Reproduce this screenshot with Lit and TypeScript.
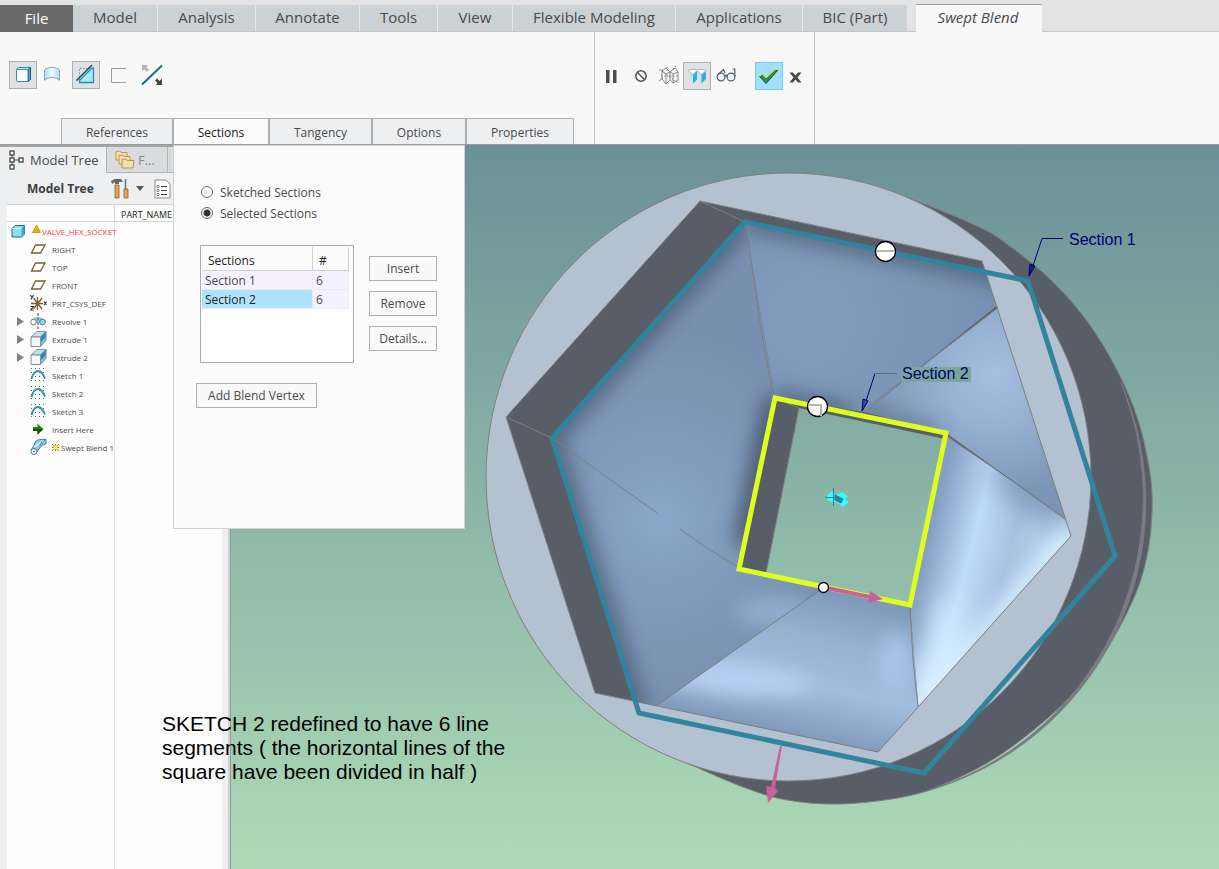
import { LitElement, html, svg, css, nothing } from "lit";
import { customElement, state } from "lit/decorators.js";

const ribbonTabs = [
  { label: "File", width: 73, cls: "file" },
  { label: "Model", width: 85, cls: "" },
  { label: "Analysis", width: 98, cls: "" },
  { label: "Annotate", width: 104, cls: "" },
  { label: "Tools", width: 78, cls: "" },
  { label: "View", width: 75, cls: "" },
  { label: "Flexible Modeling", width: 163, cls: "" },
  { label: "Applications", width: 127, cls: "" },
  { label: "BIC (Part)", width: 105, cls: "" },
  { label: "Swept Blend", width: 126, cls: "current" },
];

const panelTabs = [
  { label: "References", width: 112 },
  { label: "Sections", width: 96 },
  { label: "Tangency", width: 103 },
  { label: "Options", width: 94 },
  { label: "Properties", width: 108 },
];

type Kind = "plane" | "csys" | "revolve" | "extrude" | "sketch" | "insert" | "blend";

const treeRows: { label: string; kind: Kind; expandable?: boolean; fresh?: boolean }[] = [
  { label: "RIGHT", kind: "plane" },
  { label: "TOP", kind: "plane" },
  { label: "FRONT", kind: "plane" },
  { label: "PRT_CSYS_DEF", kind: "csys" },
  { label: "Revolve 1", kind: "revolve", expandable: true },
  { label: "Extrude 1", kind: "extrude", expandable: true },
  { label: "Extrude 2", kind: "extrude", expandable: true },
  { label: "Sketch 1", kind: "sketch" },
  { label: "Sketch 2", kind: "sketch" },
  { label: "Sketch 3", kind: "sketch" },
  { label: "Insert Here", kind: "insert" },
  { label: "Swept Blend 1", kind: "blend", fresh: true },
];

/* Silhouette of the valve body behind the front face, clockwise from the top. */
const bodyOutline: [number, number][] = [
  [906, 197], [937, 209], [977, 226], [1003, 241], [1050, 279], [1087, 321], [1117, 370], [1138, 420], [1150, 473],
  [1152, 513], [1147, 556], [1133, 600], [1103, 655], [1063, 704], [1003, 753], [947, 783], [903, 797], [840, 804],
  [787, 800], [743, 787], [687, 763], [672, 756],
];

/* Smooth curve through a list of points (Catmull-Rom converted to cubic Béziers). */
function smooth(p: [number, number][]): string {
  let d = `M${p[0][0]} ${p[0][1]}`;
  for (let i = 0; i < p.length - 1; i++) {
    const a = p[Math.max(i - 1, 0)];
    const b = p[i];
    const c = p[i + 1];
    const e = p[Math.min(i + 2, p.length - 1)];
    d += `C${b[0] + (c[0] - a[0]) / 6} ${b[1] + (c[1] - a[1]) / 6} ${c[0] - (e[0] - b[0]) / 6} ${c[1] - (e[1] - b[1]) / 6} ${c[0]} ${c[1]}`;
  }
  return d;
}

const glyphs: Record<Kind, unknown> = {
  plane: svg`<path d="M5.500 5H15L10.500 13H1.500Z" fill="#fff" stroke="#7a5c2e" stroke-width="1.300"/>`,
  csys: svg`<g fill="none" stroke="#7a5c2e" stroke-width="1.300"><path d="M1 9.500H13M7.500 3V16M3.500 4L12 15M12 4L3.500 15"/></g><g stroke="#333" fill="none" stroke-width="1.100"><path d="M.5 1L2 3.500M3.500 1L1 5.500M14 7.500L16.500 11M16.500 7.500L14 11M.5 12.500H3.500L.5 16H3.500"/></g>`,
  revolve: svg`<path d="M2 8C4 3.500 12 3.500 14 8L8 11Z" fill="#9ccfe6"/><circle cx="3.500" cy="10" r="2.800" fill="#fff" stroke="#777"/><circle cx="12.500" cy="10" r="2.800" fill="#8fdcf5" stroke="#2a7fa3"/><path d="M8 1V17" stroke="#444" stroke-dasharray="3 1.500"/>`,
  extrude: svg`<path d="M1 7L7 1.500H16L10.500 7Z" fill="#b4e4f5" stroke="#6d7f88" stroke-width=".8"/><path d="M10.500 7L16 1.500V10.500L10.500 16.500Z" fill="#7cc3df" stroke="#6d7f88" stroke-width=".8"/><path d="M11 7L15.800 2V7L11 12Z" fill="#2f88b0"/><path d="M1 7H10.500V16.500H1Z" fill="#f4f6f7" stroke="#8b8f92"/>`,
  sketch: svg`<path d="M1 2.500H16M1 6.500H16M1 10.500H16M1 14.500H16" stroke="#666" stroke-dasharray="1 3"/><path d="M1.500 13C3 7 5 5 8 5C11.500 5 13 8 15 12.500" fill="none" stroke="#3291bd" stroke-width="1.800"/>`,
  insert: svg`<path d="M3 7H7.500V3.500L13.500 9L7.500 14.500V11H3Z" fill="#0a8a12"/><path d="M3 9H13.500L7.500 14.500V11H3Z" fill="#1c4d0f"/><path d="M7.500 3.500L13.500 9" stroke="#a9e23a" stroke-width=".8"/>`,
  blend: svg`<path d="M1 12C3 9 4 8 5 5C6 2 9 1 16 1.500V6C12 6.500 10 9 7 14Z" fill="#8ecbe3" stroke="#3b7d9a"/><path d="M4 9C8 8 7 4 15 3" fill="none" stroke="#e2f6fd" stroke-width="1.500"/><path d="M10 8L12 3M12 6L15 2" stroke="#2d7595" stroke-width=".8"/><circle cx="4" cy="13.500" r="3" fill="#f4fbfd" stroke="#3b7d9a"/><circle cx="4" cy="13.500" r=".8" fill="#444"/>`,
};

const toolIcons = {
  solid: svg`<path d="M4.500 5.500L6.500 3.500H18.500V15L16.500 17.500Z" fill="#bfeaf8" stroke="#2b8bb0"/><path d="M16 5.500L18.500 3.500V15.500L16 17.500Z" fill="#4fa6c8" stroke="#17475e" stroke-width=".8"/><rect x="4.500" y="5.500" width="11.500" height="12" rx="1" fill="#fff" stroke="#2b8bb0"/>`,
  surface: svg`<path d="M2.500 16.500V6C6 2.500 14 2.500 17.500 6V16.500C14 12.500 6 12.500 2.500 16.500Z" fill="url(#surf)" stroke="#9aa0a4"/>`,
  remove: svg`<path d="M4.500 16V4.500H16" fill="none" stroke="#888" stroke-dasharray="1.500 1.500"/><path d="M18.500 4V18.500H4.500V16.500L17 4Z" fill="#a6eafd" stroke="#2b8bb0" stroke-width="1.300"/><path d="M1.500 16.500L17 1" stroke="#17475e" stroke-width="1.500"/>`,
  thin: svg`<path d="M16 4.500H1.500V18.500H16" fill="none" stroke="#9a9c9e"/>`,
  flip: svg`<path d="M2 20.500L22 1.500" stroke="#1d6a8a" stroke-width="2"/><path d="M2 1H8L6.500 3.500L9 6L7 8L4.500 5.500L2 7Z" fill="#b5b5b5"/><path d="M22 21H15.500L17.500 19L15 16.500L17 14.500L19.500 17L22 14.500Z" fill="#444"/>`,
  pause: svg`<path d="M7 5H10.500V18H7ZM14 5H17.500V18H14Z" fill="#4b4d50"/>`,
  none: svg`<circle cx="12" cy="11" r="5.200" fill="none" stroke="#55585b" stroke-width="1.600"/><path d="M8.500 7.500L15.500 14.500" stroke="#55585b" stroke-width="1.500"/>`,
  wire: svg`<g fill="none" stroke="#6b6d70" stroke-width=".8"><path d="M4 6L8 3L12 7L8 9ZM4 6V14L8 19V9M12 7V15L8 19M12 7L17 3L20 7L15 9L12 7M15 9V18L20 15V7M15 18L12 15M1 5H5M1 16L5 13"/><path d="M9 2V6M18 1L14 5M3 11H20M4 6L20 18" stroke-dasharray="1.500 1.500"/></g>`,
  preview: svg`<path d="M2 6V13L7 18.500V9.500Z" fill="#bdeafb"/><path d="M7 9.500L11.500 5V14L7 18.500Z" fill="#37acdf"/><path d="M11 5L15.500 9.500V18.500L11 13Z" fill="#bdeafb"/><path d="M15.500 9.500L20 6V14L15.500 18.500Z" fill="#37acdf"/><path d="M2 5.500L4 4.500H10L11 5.500L12 4.500H18L20 5.500L15.500 9.500L11 5.500L7 9.500Z" fill="#fff" stroke="#a8a8a8" stroke-width=".8"/>`,
  glasses: svg`<g fill="#eef4f7" stroke="#5a5d60" stroke-width="1.200"><circle cx="6" cy="12" r="3.900"/><circle cx="16" cy="12" r="3.900"/></g><path d="M2.500 10L8.500 4.500L10 8M10 12C10 9.500 12 9.500 12 12M19.800 12V4H17.500" fill="none" stroke="#5a5d60" stroke-width="1.200"/>`,
  ok: svg`<path d="M1.500 11.500L4.500 9.500L8 13.500L17 5H20L8 18.500Z" fill="#2d8a52" stroke="#17552f"/><path d="M1.500 11L4.500 9L8 13L17 4.500H20" fill="none" stroke="#c5e62e" stroke-width="1.100"/>`,
  cancel: svg`<path d="M3.500 7.500H7L9.500 10.500L12 7.500H15.500L11.500 12.500L15.500 17.500H12L9.500 14.500L7 17.500H3.500L7.500 12.500Z" fill="#484848"/>`,
};

@customElement("app-root")
export class AppRoot extends LitElement {
  @state() private mode = "selected";
  @state() private row = 1;

  static styles = css`
    :host {
      display: flex;
      flex-direction: column;
      min-height: 100vh;
      font-family: "Open Sans", "Noto Sans", sans-serif;
      font-size: 12px;
      color: #4a4a4d;
      background: #f8f8f8;
    }
    * { box-sizing: border-box; }
    button { font: inherit; color: inherit; margin: 0; padding: 0; border: 0; background: none; }
    svg { display: block; }
    .ribbon {
      display: flex;
      height: 32px;
      padding-top: 5px;
      background: #e3e3e3;
      border-bottom: 1px solid #c4c7c9;
    }
    .ribbon button {
      background: #ccd1d4;
      border-right: 1px solid #e6e8e9;
      font-size: 15px;
      line-height: 24px;
      padding-bottom: 2px;
      white-space: nowrap;
      flex: none;
    }
    .ribbon .file { background: #696969; color: #fff; border-right: 0; height: 27px; }
    .ribbon .current {
      background: #f8f8f8;
      border: 0;
      border-top: 1px solid #9b9da0;
      font-style: italic;
      height: 28px;
      padding: 0 2px 4px 0;
      margin: -1px 0 -1px 8px;
      position: relative;
    }
    .dashboard {
      display: flex;
      height: 113px;
      border-bottom: 1px solid #9b9b9b;
      position: relative;
    }
    .left { width: 595px; border-right: 1px solid #c0c2c4; display: flex; flex-direction: column; justify-content: space-between; }
    .tools { display: flex; align-items: center; gap: 10px; padding: 29px 0 0 9px; }
    .pair { display: flex; align-items: center; gap: 5px; }
    .tool { display: flex; align-items: center; justify-content: center; width: 28px; height: 28px; flex: none; }
    .narrow { width: 20px; }
    .mid { width: 24px; }
    .pressed { background: #e0e1e3; border: 1px solid #adafb1; }
    .confirm { background: #a2defd; border: 1px solid #70cbf6; }
    .actions { display: flex; width: 220px; border-right: 1px solid #c0c2c4; padding-top: 30px; }
    .wide { width: 30px; }
    .gap { width: 14px; }
    .panel-tabs { display: flex; padding-left: 61px; }
    .panel-tabs button {
      height: 26px;
      padding-top: 2px;
      line-height: 22px;
      background: #eeeff1;
      border: 1px solid #adafb1;
      border-bottom: 0;
    }
    .panel-tabs .open { background: #fcfcfc; color: #222; }
    .slide {
      position: absolute;
      top: 113px;
      left: 173px;
      width: 292px;
      height: 384px;
      z-index: 2;
      background: #fbfbfb;
      border: 1px solid #cfd1d2;
      padding: 36px 22px 0;
    }
    .option { display: flex; align-items: center; gap: 6px; height: 21px; margin-left: 5px; }
    .option input {
      appearance: none;
      margin: 0 1px 2px 0;
      width: 12px;
      height: 12px;
      border: 1px solid #666;
      border-radius: 50%;
      background: #fff;
    }
    .option input:checked { background: radial-gradient(circle, #333 0 3px, #fff 4px); }
    .sections { display: flex; gap: 15px; margin: 21px 0 20px 4px; }
    .listbox { width: 154px; height: 118px; border: 1px solid #a9abad; background: #fff; padding: 1px; }
    .listbox table { border-collapse: separate; border-spacing: 0; table-layout: fixed; width: 147px; }
    .listbox th {
      height: 24px;
      padding: 4px 0 0 6px;
      text-align: left;
      font-weight: 400;
      color: #222;
      background: #fbfbfb;
      border-right: 1px solid #cfd1d2;
      border-bottom: 1px solid #cfd1d2;
    }
    .listbox td { height: 19px; padding: 1px 3px 0; line-height: 17px; background: #f5f1fe; border-right: 1px solid #e9e9f0; border-bottom: 1px solid #e9e9f0; }
    .listbox td.picked { background: #afe2ff; color: #222; }
    .name-col { width: 111px; }
    .stack { display: flex; flex-direction: column; gap: 10px; padding-top: 11px; }
    .push { height: 25px; width: 68px; border: 1px solid #adafb1; background: #f9f9f9; }
    .push.add { width: 121px; }
    .main { flex: 1; display: flex; position: relative; }
    .side {
      width: 231px;
      flex: none;
      background: #eeeff1;
      border-right: 1px solid #9a9a9a;
      box-shadow: inset -2px 0 #cfd0d1;
      display: flex;
      flex-direction: column;
    }
    .side-tabs { display: flex; height: 28px; border-top: 2px solid #a3a5a7; margin-right: 3px; }
    .side-tabs button { display: flex; align-items: center; gap: 6px; font-size: 13px; padding-left: 9px; width: 106px; }
    .side-tabs .folder { width: 62px; gap: 3px; padding-left: 8px; background: #d9dcdd; border: 1px solid #b1b3b5; border-top: 0; color: #888; }
    .side-tabs .rest { flex: 1; background: #d9dcdd; border-bottom: 1px solid #b1b3b5; }
    .side-head { display: flex; align-items: center; height: 31px; padding-left: 27px; gap: 6px; }
    .side-head h2 { margin: 0 6px 0 0; font-size: 12px; line-height: 16px; width: 72px; white-space: nowrap; color: #3d3d40; }
    .side-head .tool { width: 18px; height: 22px; }
    .side-head .list { margin-left: 2px; }
    .side-head .arrow { width: 10px; }
    .tree-wrap { flex: 1; display: flex; margin: 0 8px 0 7px; background: linear-gradient(90deg, #fdfdfd 107px, #e6e7e8 107px 108px, #fdfdfd 108px); border-top: 1px solid #d3d5d6; }
    .tree { width: 100%; border-collapse: separate; border-spacing: 0; table-layout: fixed; font-size: 8px; height: 0; }
    .tree th { height: 17px; padding: 2px 0 0 6px; text-align: left; font-size: 9px; line-height: 13px; font-weight: 400; color: #222; border-bottom: 1px solid #d3d5d6; }
    .tree th:first-child { border-right: 1px solid #d3d5d6; }
    .tree td { height: 18px; padding: 0; white-space: nowrap; }
    .tree .c1 { width: 108px; }
    .node { display: flex; align-items: center; height: 18px; padding-left: 9px; }
    .node .twist { width: 8px; margin-right: 6px; }
    .node .glyph { margin-right: 5px; flex: none; }
    .node .new { margin-right: 2px; flex: none; }
    .root { padding-left: 4px; color: #ee4438; }
    .root .warn { margin: 0 1px 4px 6px; flex: none; }
    .root .glyph { margin-right: 0; }
    .view { flex: 1; min-width: 0; background: linear-gradient(#6b9098, #addbb6); }
    .scene { width: 100%; height: 100%; }
    .tag { font-family: "Liberation Sans", Arial, sans-serif; font-size: 16px; fill: #000070; }
    .note {
      position: absolute;
      left: 162px;
      top: 567px;
      width: 360px;
      margin: 0;
      font: 21px/24px "Liberation Sans", Arial, sans-serif;
      color: #000;
    }
    .edge { fill: none; stroke: #7f7f7f; stroke-width: 1; }
    .section1 { fill: none; stroke: #31849b; stroke-width: 5; stroke-linejoin: round; }
    .section2 { fill: none; stroke: #dfff20; stroke-width: 5; }
    .shade { fill: none; stroke: #3d4a5c; }
    .leader { fill: none; stroke: #000070; }
  `;

  private icon(name: keyof typeof toolIcons, w = 22) {
    return html`<svg width=${w} height="22" viewBox="0 0 ${w} 22" aria-hidden="true">${toolIcons[name]}</svg>`;
  }

  private renderSlide() {
    const rows = ["Section 1", "Section 2"];
    return html`<section class="slide" aria-label="Sections">
      ${[["sketched", "Sketched Sections"], ["selected", "Selected Sections"]].map(
        ([id, label]) => html`<label class="option"
          ><input type="radio" name="mode" .checked=${this.mode === id} @change=${() => (this.mode = id)} />${label}</label>`
      )}
      <div class="sections">
        <div class="listbox">
          <table>
            <thead><tr><th class="name-col">Sections</th><th>#</th></tr></thead>
            <tbody>
              ${rows.map((r, i) => html`<tr @click=${() => (this.row = i)}><td class=${this.row === i ? "picked" : ""}>${r}</td><td>6</td></tr>`)}
            </tbody>
          </table>
        </div>
        <div class="stack">
          ${["Insert", "Remove", "Details..."].map((t) => html`<button class="push">${t}</button>`)}
        </div>
      </div>
      <button class="push add">Add Blend Vertex</button>
    </section>`;
  }

  private renderSide() {
    return html`<aside class="side">
      <div class="side-tabs">
        <button>
          <svg width="15" height="20" viewBox="0 0 15 20" aria-hidden="true"><path d="M3 5V15M5 10H10" stroke="#555"/><g fill="#fff" stroke="#444" stroke-width="1.300"><rect x="1" y="1" width="4" height="4"/><rect x="1" y="8" width="4" height="4"/><rect x="1" y="15" width="4" height="4"/><rect x="10" y="8" width="4" height="4"/></g></svg>
          Model Tree
        </button>
        <button class="folder">
          <svg width="20" height="19" viewBox="0 0 20 19" aria-hidden="true"><g fill="#f3dfae" stroke="#b0813a" stroke-width=".8"><path d="M1 10V1.500L5 1L6 2.500H12V10Z"/><path d="M4 14V5.500L8 5L9 6.500H15V14Z"/><path d="M7 18V9.500L11 9L12 10.500H19L18 18Z"/></g></svg>
          F...
        </button>
        <span class="rest"></span>
      </div>
      <div class="side-head">
        <h2>Model Tree</h2>
        <button class="tool" aria-label="Settings"><svg width="18" height="22" viewBox="0 0 18 22" aria-hidden="true"><path d="M0 3L4 1H10L12 4H8V6H4V4L1 6Z" fill="#65686b"/><path d="M4 7H8V20H4Z" fill="#d9a75f" stroke="#8b5e24" stroke-width=".8"/><path d="M14.500 1V11" stroke="#75787b" stroke-width="1.600"/><path d="M13 11H17V20H13Z" fill="#d9a75f" stroke="#8b5e24" stroke-width=".8"/></svg></button>
        <button class="tool arrow" aria-label="Settings menu"><svg width="8" height="5" viewBox="0 0 8 5" aria-hidden="true"><path d="M0 0H8L4 5Z" fill="#555"/></svg></button>
        <button class="tool list" aria-label="Show"><svg width="17" height="20" viewBox="0 0 17 20" aria-hidden="true"><path d="M1 1H12L16 5V19H1Z" fill="#fff" stroke="#8a8c8e"/><path d="M7 7.500H13M7 11.500H13M7 15.500H13" stroke="#444"/><g fill="none" stroke="#555" stroke-width=".8"><circle cx="4" cy="7.500" r="1.200"/><circle cx="4" cy="11.500" r="1.200"/><circle cx="4" cy="15.500" r="1.200"/></g></svg></button>
      </div>
      <div class="tree-wrap">
        <table class="tree">
          <thead><tr><th class="c1"></th><th>PART_NAME</th></tr></thead>
          <tbody>
            <tr><td><div class="node root">
              <svg class="glyph" width="15" height="16" viewBox="0 0 15 16" aria-hidden="true"><path d="M1 5.500L4 2.500H13.500V11L10.500 14H1Z" fill="#8fdcf5" stroke="#1d6a8a"/><path d="M10.500 5.500L13.500 2.500V11L10.500 14Z" fill="#3ba2cb"/><path d="M1 5.500H10.500" stroke="#e2f7fd"/></svg>
              <svg class="warn" width="9" height="8" viewBox="0 0 9 8" aria-hidden="true"><path d="M4.500 0L8.500 7.500H.5Z" fill="#e7b400" stroke="#b88600" stroke-width=".7"/></svg>VALVE_HEX_SOCKET</div></td><td></td></tr>
            ${treeRows.map((r) => html`<tr><td><div class="node">
              <svg class="twist" width="8" height="9" viewBox="0 0 8 9" aria-hidden="true">${r.expandable ? svg`<path d="M1 0L8 4.500L1 9Z" fill="#828282"/>` : nothing}</svg>
              <svg class="glyph" width="17" height="18" viewBox="0 0 17 18" aria-hidden="true">${glyphs[r.kind]}</svg>
              ${r.fresh ? html`<svg class="new" width="7" height="7" viewBox="0 0 7 7" aria-hidden="true"><path d="M0 0L7 7M7 0L0 7M0 3.500H7M3.500 0V7" stroke="#555" stroke-width=".8"/><path d="M1.500 1.500H5.500V5.500H1.500Z" fill="#fff200"/></svg>` : nothing}${r.label}</div></td><td></td></tr>`)}
          </tbody>
        </table>
      </div>
    </aside>`;
  }

  private renderScene() {
    const outline = smooth(bodyOutline);
    return html`<svg class="scene" viewBox="231 145 988 724" preserveAspectRatio="xMidYMin meet" role="img" aria-label="Swept blend model">
      <defs>
        <linearGradient id="back" gradientUnits="userSpaceOnUse" x1="0" y1="145" x2="0" y2="869"><stop offset="0" stop-color="#6b9098"/><stop offset="1" stop-color="#addbb6"/></linearGradient>
        <radialGradient id="f1" gradientUnits="userSpaceOnUse" cx="810" cy="320" r="190"><stop offset="0" stop-color="#829dbd"/><stop offset="1" stop-color="#7590b0"/></radialGradient>
        <radialGradient id="f2" gradientUnits="userSpaceOnUse" cx="995" cy="375" r="125"><stop offset="0" stop-color="#a5bfe0"/><stop offset=".4" stop-color="#97b1d2"/><stop offset="1" stop-color="#7b95b5"/></radialGradient>
        <linearGradient id="f3" gradientUnits="userSpaceOnUse" x1="922" y1="560" x2="1075" y2="600"><stop offset="0" stop-color="#849fc1"/><stop offset=".12" stop-color="#9cb7d9"/><stop offset=".28" stop-color="#bfdbfb"/><stop offset=".52" stop-color="#a8c2e2"/><stop offset=".75" stop-color="#b8d3f0"/><stop offset="1" stop-color="#d4efff"/></linearGradient>
        <linearGradient id="f4" gradientUnits="userSpaceOnUse" x1="845" y1="590" x2="810" y2="740"><stop offset="0" stop-color="#7b97b7"/><stop offset=".35" stop-color="#97b1d1"/><stop offset=".65" stop-color="#a3bddf"/><stop offset="1" stop-color="#7f9abb"/></linearGradient>
        <radialGradient id="f5" gradientUnits="userSpaceOnUse" cx="660" cy="520" r="190"><stop offset="0" stop-color="#8aa6c8"/><stop offset=".5" stop-color="#7e99b9"/><stop offset="1" stop-color="#7890b0"/></radialGradient>
        <filter id="soft" filterUnits="userSpaceOnUse" x="450" y="150" width="750" height="680" color-interpolation-filters="sRGB"><feGaussianBlur stdDeviation="10"/></filter>
        <filter id="wide" filterUnits="userSpaceOnUse" x="450" y="150" width="750" height="680" color-interpolation-filters="sRGB"><feGaussianBlur stdDeviation="15"/></filter>
        <clipPath id="mouth"><path d="M700 201L982 261L1071 536L878 752L595 693L506 417Z"/></clipPath>
        <clipPath id="c1"><path d="M745 222L1028 281L864 412L775 398Z"/></clipPath>
        <clipPath id="c2"><path d="M1028 284L864 412L946 433L1090 536L1116 556Z"/></clipPath>
        <clipPath id="c3"><path d="M946 435L1090 536L1116 556L924 773L910 605Z"/></clipPath>
        <clipPath id="c4"><path d="M910 605L823 588L639 718L924 773Z"/></clipPath>
        <clipPath id="c5"><path d="M745 222L552 438L639 718L823 588L739 569L775 398Z"/></clipPath>
      </defs>
      <path d=${outline + "Z"} fill="#585e68"/>
      <path class="edge" d=${outline}/>
      <path d="M1121 383A300 300 0 0 1 923 792A305 306 0 0 0 1121 383Z" fill="#777c85" stroke="#7c7d80"/>
      <ellipse cx="788.500" cy="477" rx="302.500" ry="304" fill="#b4c1d1" stroke="#7f7f7f"/>
      <g clip-path="url(#mouth)">
        <path d="M700 201L982 261L1071 536L878 752L595 693L506 417Z" fill="#585e68"/>
        <g clip-path="url(#c5)">
          <path d="M500 200H850V730H500Z" fill="url(#f5)"/>
          <ellipse cx="775" cy="612" rx="40" ry="14" fill="#93aecf" filter="url(#soft)"/>
          <path class="shade" d="M745 222L552 438L639 713" stroke-width="14" filter="url(#soft)" opacity=".85"/>
          <path class="shade" d="M775 398L744 545" stroke-width="18" filter="url(#soft)"/>
        </g>
        <g clip-path="url(#c1)">
          <path d="M740 215H1040V420H740Z" fill="url(#f1)"/>
          <path class="shade" d="M745 222L1028 281M775 398L850 413" stroke-width="12" filter="url(#soft)" opacity=".9"/>
        </g>
        <g clip-path="url(#c2)">
          <path d="M850 270H1120V570H850Z" fill="url(#f2)"/>
          <path class="shade" d="M840 408L940 432" stroke-width="9" filter="url(#soft)" opacity=".6"/>
        </g>
        <g clip-path="url(#c3)">
          <path d="M900 420H1120V780H900Z" fill="url(#f3)"/>
          <ellipse cx="1035" cy="490" rx="50" ry="22" fill="#7f9abc" filter="url(#wide)" transform="rotate(36 1035 490)"/>
          <ellipse cx="935" cy="680" rx="20" ry="85" fill="#d3edff" filter="url(#wide)" transform="rotate(12 935 680)"/>
          <path d="M918 707L1071 536" stroke="#d9f2ff" stroke-width="16" filter="url(#soft)"/>
          <path d="M912 570L915 650" stroke="#849fc1" stroke-width="8" filter="url(#soft)"/>
        </g>
        <g clip-path="url(#c4)">
          <path d="M630 580H930V780H630Z" fill="url(#f4)"/>
          <ellipse cx="735" cy="680" rx="75" ry="13" fill="#bbd5f8" filter="url(#soft)" transform="rotate(5 735 680)"/>
          <ellipse cx="895" cy="662" rx="16" ry="30" fill="#a9c4e9" filter="url(#soft)"/>
        </g>
      </g>
      <path d="M775 398L946 433L910 605L739 569Z" fill="#585e68"/>
      <path d="M799 408L945 439L910 603L766 573Z" fill="url(#back)"/>
      <g class="edge">
        <path d="M700 201L982 261L1071 536L878 752L595 693L506 417Z"/>
        <path d="M700 201L745 222M506 417L552 438M746 222C755 290 763 350 774 397M998 308L862 411M946 436L997 470M1019 486L1066 520M910 606L913 660L918 707M823 588L656 706M740 568C710 551 695 540 680 529M657 513L552 438M775 398L799 408L766 573"/>
      </g>
      <path class="section1" d="M745 222L1028 281L1115 556L924 773L639 713L552 438Z"/>
      <path class="section2" d="M775 398L946 433L910 605L739 569Z"/>
      <path d="M827 588L870 597" stroke="#c8629a" stroke-width="4"/>
      <path d="M870 591L883 599L868 603Z" fill="#c8629a"/>
      <path d="M780 746H782L775 788L778 791L768 803L766 786L771 787Z" fill="#c8629a"/>
      <circle cx="823.500" cy="587.500" r="5" fill="#fff" stroke="#000" stroke-width="1.300"/>
      <circle cx="817.500" cy="406.500" r="10" fill="#fff" stroke="#000" stroke-width="1.300"/>
      <path d="M808 405H821V416" fill="none" stroke="#b9b6a4" stroke-width="2"/>
      <circle cx="885.500" cy="251.500" r="10" fill="#fff" stroke="#000" stroke-width="1.300"/>
      <path d="M876 251H895" stroke="#b9b6a4" stroke-width="2"/>
      <path d="M827 495L832 491L836 495L842 492L848 496L845 499L849 502L843 507L838 503L833 502L828 501Z" fill="#39fbff"/>
      <path d="M833.500 488V506M825 497.500H836M835 495L843 499L841 503L835 500Z" fill="#27839a" stroke="#27839a"/>
      <path class="leader" d="M1063 238.500H1042L1031 272"/>
      <path d="M1030 264L1035 266L1029 276Z" fill="#1c1c82" stroke="#000070"/>
      <path class="leader" d="M875 373.500L864 407"/><path d="M875 373.500H897" stroke="#5665a2"/>
      <path d="M863 399L868 401L862 411Z" fill="#3c4d8a" stroke="#000070"/>
      <path d="M901 367H971V382H901Z" fill="#7ca59c"/>
      <text class="tag" x="1069" y="245">Section 1</text>
      <text class="tag" x="902" y="379">Section 2</text>
    </svg>`;
  }

  render() {
    return html`
      <nav class="ribbon">
        ${ribbonTabs.map((t) => html`<button class=${t.cls} style="width:${t.width}px">${t.label}</button>`)}
      </nav>
      <header class="dashboard">
        <div class="left">
          <div class="tools">
            <div class="pair">
              <button class="tool pressed" aria-label="Solid">${this.icon("solid")}</button>
              <button class="tool narrow" aria-label="Surface"><svg width="20" height="22" viewBox="0 0 20 22" aria-hidden="true"><defs><linearGradient id="surf"><stop offset="0" stop-color="#9cdcf5"/><stop offset=".5" stop-color="#f4fcff"/><stop offset="1" stop-color="#9cdcf5"/></linearGradient></defs>${toolIcons.surface}</svg></button>
            </div>
            <button class="tool pressed" aria-label="Remove material">${this.icon("remove")}</button>
            <button class="tool narrow" aria-label="Thin">${this.icon("thin", 20)}</button>
            <button class="tool mid" aria-label="Flip side">${this.icon("flip", 24)}</button>
          </div>
          <div class="panel-tabs">
            ${panelTabs.map((t) => html`<button class=${t.label === "Sections" ? "open" : ""} style="width:${t.width}px">${t.label}</button>`)}
          </div>
        </div>
        <div class="actions">
          <button class="tool wide" aria-label="Pause">${this.icon("pause")}</button>
          <button class="tool wide" aria-label="No preview">${this.icon("none")}</button>
          <button class="tool" aria-label="Unattached preview">${this.icon("wire")}</button>
          <button class="tool pressed" aria-label="Attached preview">${this.icon("preview")}</button>
          <button class="tool wide" aria-label="Verify">${this.icon("glasses")}</button>
          <span class="gap"></span>
          <button class="tool confirm" aria-label="OK">${this.icon("ok")}</button>
          <button class="tool" aria-label="Cancel">${this.icon("cancel")}</button>
        </div>
        ${this.renderSlide()}
      </header>
      <main class="main">
        ${this.renderSide()}
        <div class="view">${this.renderScene()}</div>
        <p class="note">SKETCH 2 redefined to have 6 line segments ( the horizontal lines of the square have been divided in half )</p>
      </main>
    `;
  }
}
